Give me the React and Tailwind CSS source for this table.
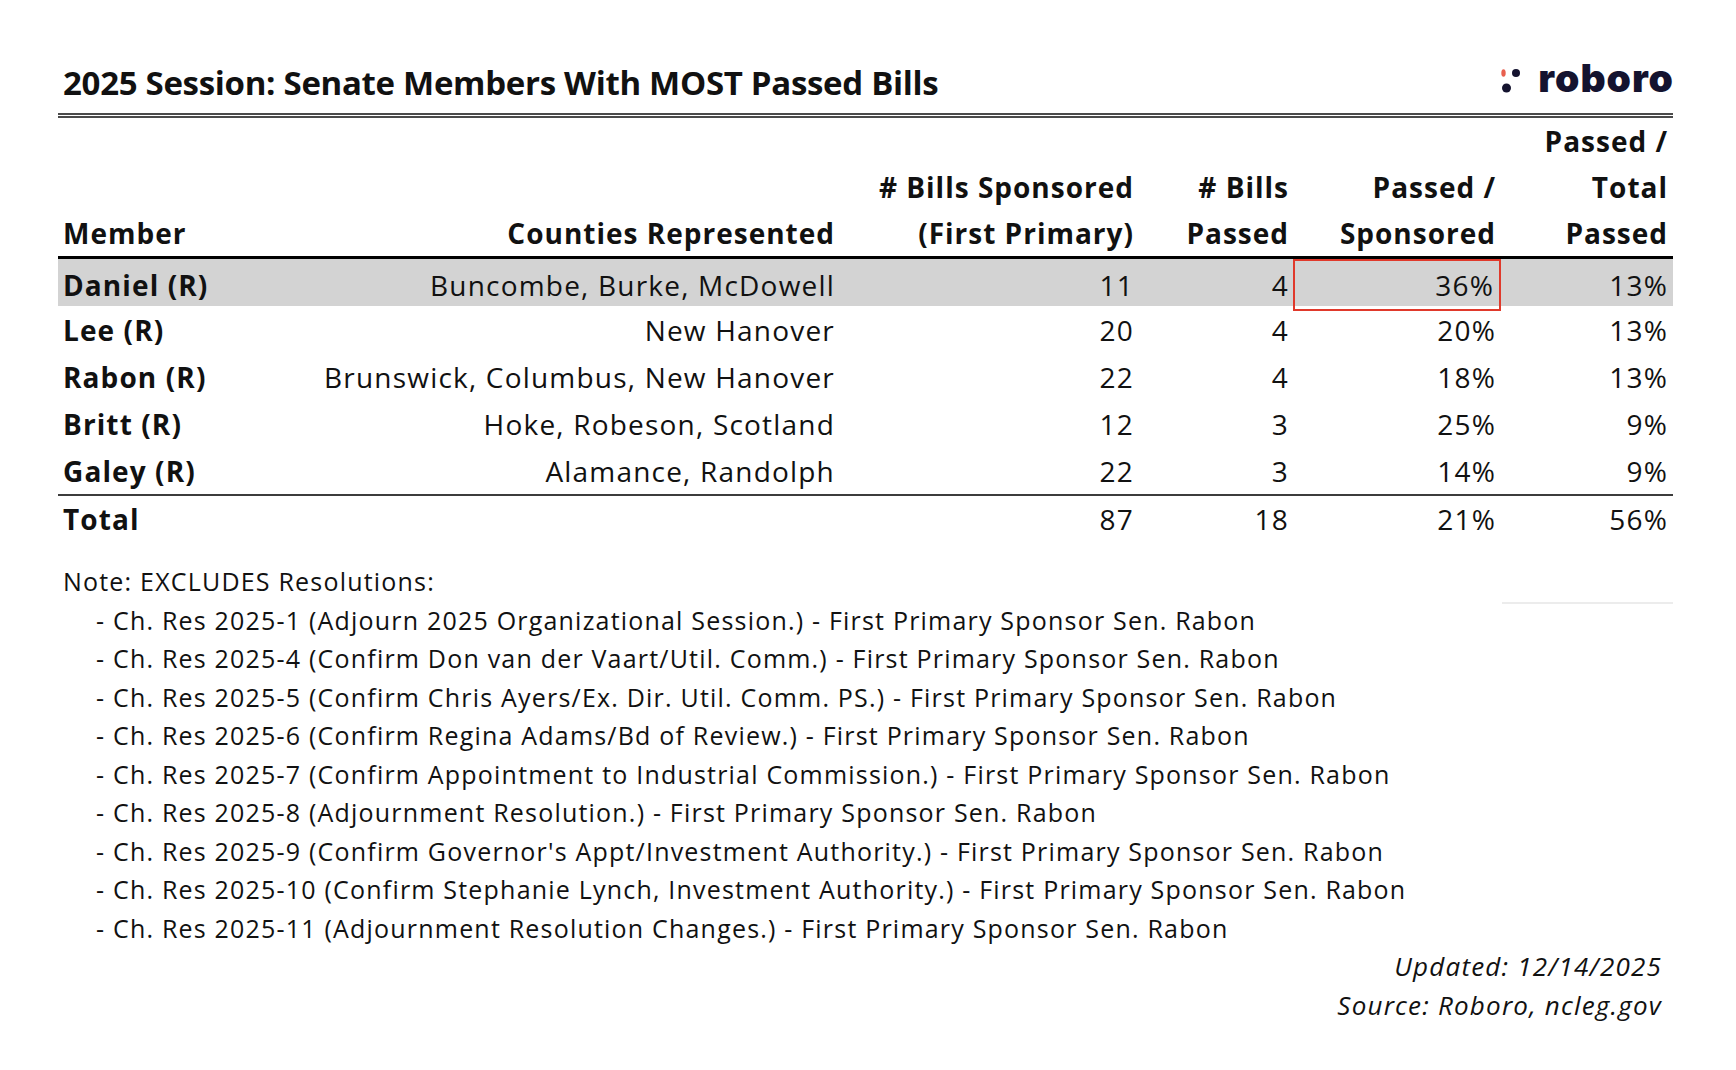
const rows = [
  { name: "Daniel (R)", counties: "Buncombe, Burke, McDowell", sponsored: "11", passed: "4", ps: "36%", pt: "13%", hi: true },
  { name: "Lee (R)", counties: "New Hanover", sponsored: "20", passed: "4", ps: "20%", pt: "13%" },
  { name: "Rabon (R)", counties: "Brunswick, Columbus, New Hanover", sponsored: "22", passed: "4", ps: "18%", pt: "13%" },
  { name: "Britt (R)", counties: "Hoke, Robeson, Scotland", sponsored: "12", passed: "3", ps: "25%", pt: "9%" },
  { name: "Galey (R)", counties: "Alamance, Randolph", sponsored: "22", passed: "3", ps: "14%", pt: "9%" },
];

const resolutions = [
  "Ch. Res 2025-1 (Adjourn 2025 Organizational Session.)",
  "Ch. Res 2025-4 (Confirm Don van der Vaart/Util. Comm.)",
  "Ch. Res 2025-5 (Confirm Chris Ayers/Ex. Dir. Util. Comm. PS.)",
  "Ch. Res 2025-6 (Confirm Regina Adams/Bd of Review.)",
  "Ch. Res 2025-7 (Confirm Appointment to Industrial Commission.)",
  "Ch. Res 2025-8 (Adjournment Resolution.)",
  "Ch. Res 2025-9 (Confirm Governor's Appt/Investment Authority.)",
  "Ch. Res 2025-10 (Confirm Stephanie Lynch, Investment Authority.)",
  "Ch. Res 2025-11 (Adjournment Resolution Changes.)",
];

const cols = "grid grid-cols-[242px_540px_299px_154px_208px_172px]";

function Logo() {
  return (
    <div className="flex items-end gap-[15px] mb-[19px]">
      <svg width="22" height="24" viewBox="0 0 22 24" className="mb-[1px]">
        <ellipse cx="2.5" cy="4" rx="2.2" ry="3.8" fill="#e8604f" />
        <circle cx="15" cy="4" r="4" fill="#14132f" />
        <circle cx="5.5" cy="19" r="4.5" fill="#14132f" />
      </svg>
      <span className="font-['Inter',sans-serif] font-black text-[39px] leading-[32px] tracking-[1px] -mr-px text-[#14132f]">
        roboro
      </span>
    </div>
  );
}

export default function App() {
  return (
    <div className="w-[1736px] h-[1070px] bg-white text-[#111] font-['Open_Sans',sans-serif]">
      <div className="ml-[58px] w-[1615px]">
        {/* Title */}
        <div className="h-[113px] flex items-end justify-between">
          <h1 className="pl-[5px] pb-[10px] text-[33px] leading-[40px] font-bold tracking-[-0.3px]">
            2025 Session: Senate Members With MOST Passed Bills
          </h1>
          <Logo />
        </div>
        <div className="h-[5px] border-y-2 border-[#4a4a4a]" />

        {/* Header */}
        <div className={`${cols} text-[28px] leading-[46px] font-bold tracking-[1px]`}>
          <div className="flex flex-col justify-end pl-[5px]">
            <span>Member</span>
          </div>
          <div className="flex flex-col justify-end items-end pr-[5px]">
            <span>Counties Represented</span>
          </div>
          <div className="flex flex-col justify-end items-end pr-[5px]">
            <span># Bills Sponsored</span>
            <span>(First Primary)</span>
          </div>
          <div className="flex flex-col justify-end items-end pr-[4px]">
            <span># Bills</span>
            <span>Passed</span>
          </div>
          <div className="flex flex-col justify-end items-end pr-[5px]">
            <span>Passed /</span>
            <span>Sponsored</span>
          </div>
          <div className="flex flex-col justify-end items-end pr-[5px]">
            <span>Passed /</span>
            <span>Total</span>
            <span>Passed</span>
          </div>
        </div>
        <div className="h-[3px] bg-black" />

        {/* Body */}
        <div className="text-[28px] tracking-[1.2px]">
          {rows.map((r) => (
            <div
              key={r.name}
              className={`${cols} h-[47px] items-center leading-[47px] ${r.hi ? "bg-[#d3d3d3]" : ""}`}
            >
              <div className="pl-[5px] pt-px font-bold tracking-[1.1px]">{r.name}</div>
              <div className="pr-[5px] pt-px text-right">{r.counties}</div>
              <div className="pr-[5px] pt-px text-right">{r.sponsored}</div>
              <div className="pr-[4px] pt-px text-right">{r.passed}</div>
              <div
                className={`h-full pr-[5px] pt-px text-right ${r.hi ? "border-2 border-[#e0392b] pr-[3px] pt-0" : ""}`}
              >
                {r.ps}
              </div>
              <div className="pr-[5px] pt-px text-right">{r.pt}</div>
            </div>
          ))}
          <div className="h-[2px] bg-[#3c3c3c]" />
          <div className={`${cols} h-[47px] items-center leading-[47px]`}>
            <div className="pl-[5px] font-bold tracking-[1.1px]">Total</div>
            <div />
            <div className="pr-[5px] text-right">87</div>
            <div className="pr-[4px] text-right">18</div>
            <div className="pr-[5px] text-right">21%</div>
            <div className="pr-[5px] text-right">56%</div>
          </div>
        </div>

        {/* Notes */}
        <div className="mt-[19px] flex justify-between text-[25px] leading-[38.5px] tracking-[1.2px]">
          <div>
            <p className="pl-[5px]">Note: EXCLUDES Resolutions:</p>
            {resolutions.map((t) => (
              <p key={t} className="pl-[38px]">
                - {t} - First Primary Sponsor Sen. Rabon
              </p>
            ))}
          </div>
          <div className="w-[171px] mt-[40px] h-[2px] bg-[#ececec]" />
        </div>

        {/* Footer */}
        <div className="pr-[11px] text-right italic text-[26px] leading-[39px] tracking-[1.2px]">
          <p>Updated: 12/14/2025</p>
          <p>Source: Roboro, ncleg.gov</p>
        </div>
      </div>
    </div>
  );
}
